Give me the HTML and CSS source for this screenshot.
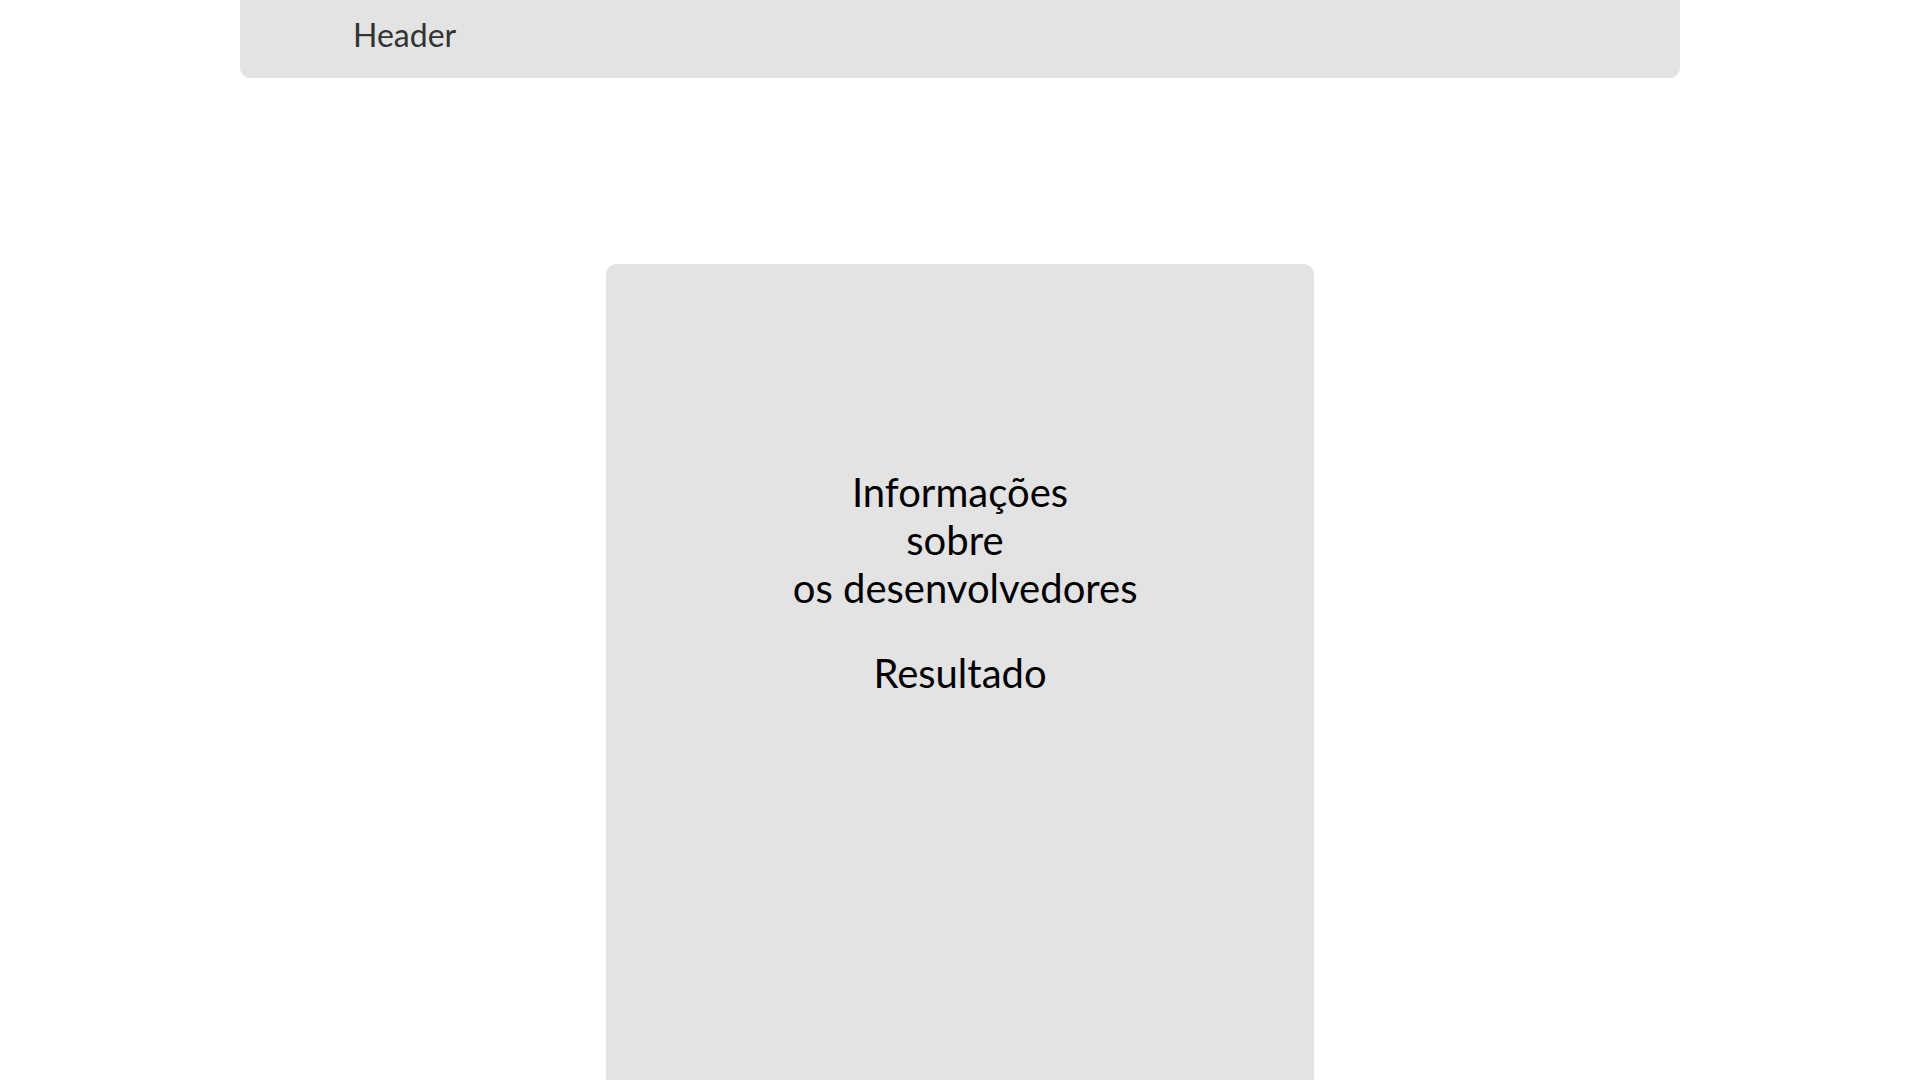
FILE: index.html
```html
<!DOCTYPE html>
<html lang="pt">
<head>
<meta charset="utf-8">
<title>Sobre</title>
<link rel="stylesheet" href="styles.css">
</head>
<body>
<header class="header">
  <span class="header-title">Header</span>
</header>
<main class="main">
  <section class="card">
    <h1 class="card-title">Informações<br>sobre&nbsp;<br>&nbsp;os desenvolvedores</h1>
    <p class="card-result">Resultado</p>
  </section>
</main>
</body>
</html>
```
FILE: styles.css
```css
* { box-sizing: border-box; }
html, body {
  margin: 0;
  padding: 0;
  background: #ffffff;
  font-family: Lato, "Noto Sans", sans-serif;
}
body {
  height: 1080px;
  overflow: hidden;
}
.header {
  width: 1440px;
  height: 78px;
  margin: 0 auto;
  background: #e3e3e3;
  border-radius: 0 0 10px 10px;
  display: flex;
  align-items: center;
  padding-left: 113px;
  padding-bottom: 10px;
}
.header-title {
  font-size: 32px;
  color: #333333;
}
.main {
  display: flex;
  justify-content: center;
  padding-top: 186px;
}
.card {
  width: 708px;
  height: 900px;
  background: #e3e3e3;
  border-radius: 10px;
  padding-top: 204px;
  text-align: center;
  color: #000000;
}
.card-title {
  margin: 0;
  font-size: 40px;
  font-weight: 400;
  line-height: 48px;
}
.card-result {
  margin: 37px 0 0;
  font-size: 40px;
  line-height: 48px;
}
```
